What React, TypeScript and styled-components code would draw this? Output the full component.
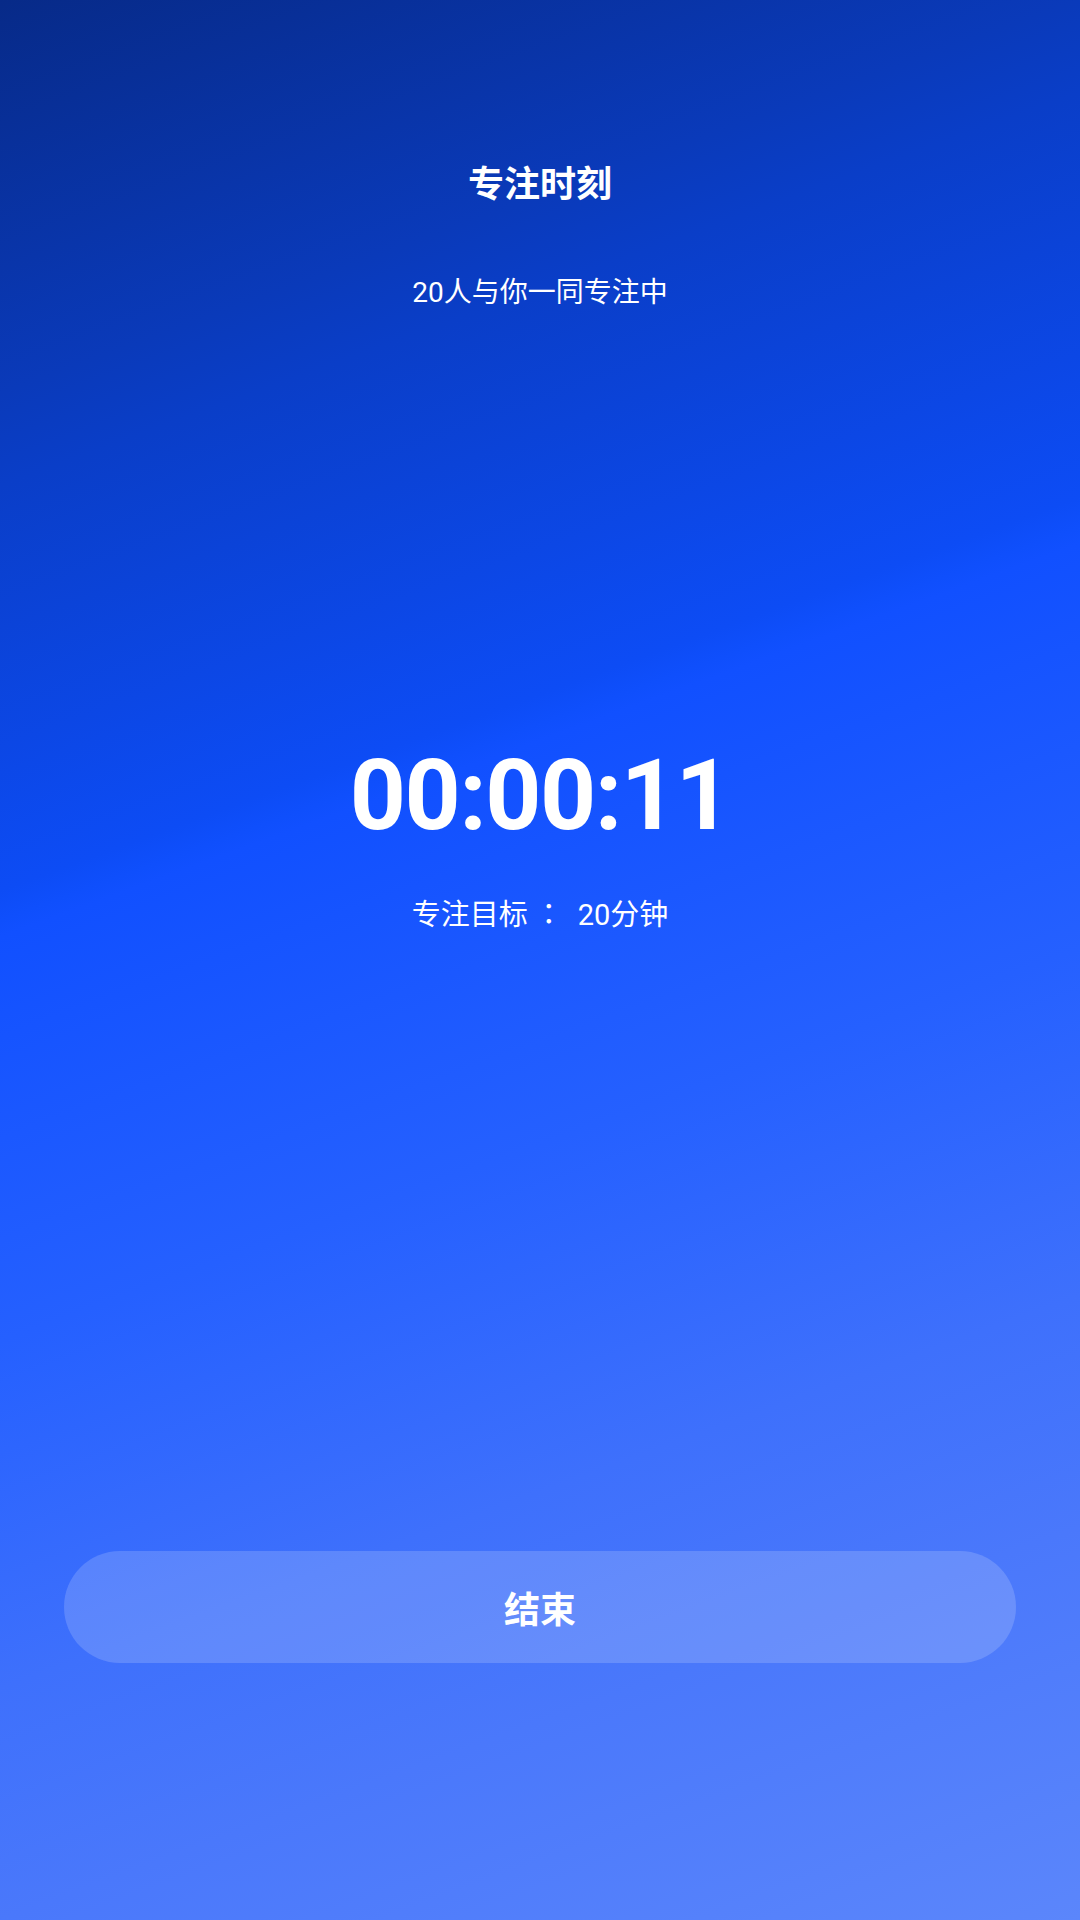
import styled, { createGlobalStyle } from "styled-components";

const GlobalStyle = createGlobalStyle`
  html, body {
    margin: 0;
    padding: 0;
  }
  body {
    font-family: Roboto, "Noto Sans CJK SC", sans-serif;
    color: #fff;
  }
`;

// diagonal two-tone gradient, soft edge running up to the right
const Page = styled.div`
  width: 1080px;
  min-height: 1920px;
  display: flex;
  flex-direction: column;
  align-items: center;
  box-sizing: border-box;
  padding-top: 160px;
  background: linear-gradient(
    160deg,
    #072a88 0%,
    #0a3aba 17%,
    #0a3ec8 21%,
    #0d4cf5 38.5%,
    #0f4ffc 39.8%,
    #1150ff 40.5%,
    #2560ff 58%,
    #3e70fc 73%,
    #4a78fb 83%,
    #5b86fb 100%
  );
`;

const Title = styled.h1`
  margin: 0;
  font-size: 36px;
  line-height: 50px;
  font-weight: 700;
`;

const Subtitle = styled.p`
  margin: 63px 0 0;
  font-size: 28px;
  line-height: 40px;
  font-weight: 400;
`;

const Timer = styled.div`
  margin-top: 434px;
  font-family: Roboto, sans-serif;
  font-size: 98px;
  line-height: 98px;
  font-weight: 700;
  letter-spacing: -1.5px;
`;

const Goal = styled.p`
  margin: 47px 0 0;
  font-size: 29px;
  line-height: 40px;
`;

// full-width colon with the wide gap seen after it
const Colon = styled.span`
  display: inline-block;
  box-sizing: border-box;
  width: 50px;
  padding-right: 8px;
  text-align: center;
  font-family: "Noto Sans CJK JP", sans-serif;
`;

const EndButton = styled.button`
  margin-top: 616px;
  width: 952px;
  height: 112px;
  border: none;
  border-radius: 56px;
  background: rgba(255, 255, 255, 0.17);
  color: #fff;
  font-family: Roboto, "Noto Sans CJK SC", sans-serif;
  font-size: 36px;
  font-weight: 700;
  cursor: pointer;
`;

export default function App() {
  return (
    <>
      <GlobalStyle />
      <Page>
        <Title>专注时刻</Title>
        <Subtitle>20人与你一同专注中</Subtitle>
        <Timer>00:00:11</Timer>
        <Goal>
          专注目标<Colon>：</Colon>20分钟
        </Goal>
        <EndButton>结束</EndButton>
      </Page>
    </>
  );
}
